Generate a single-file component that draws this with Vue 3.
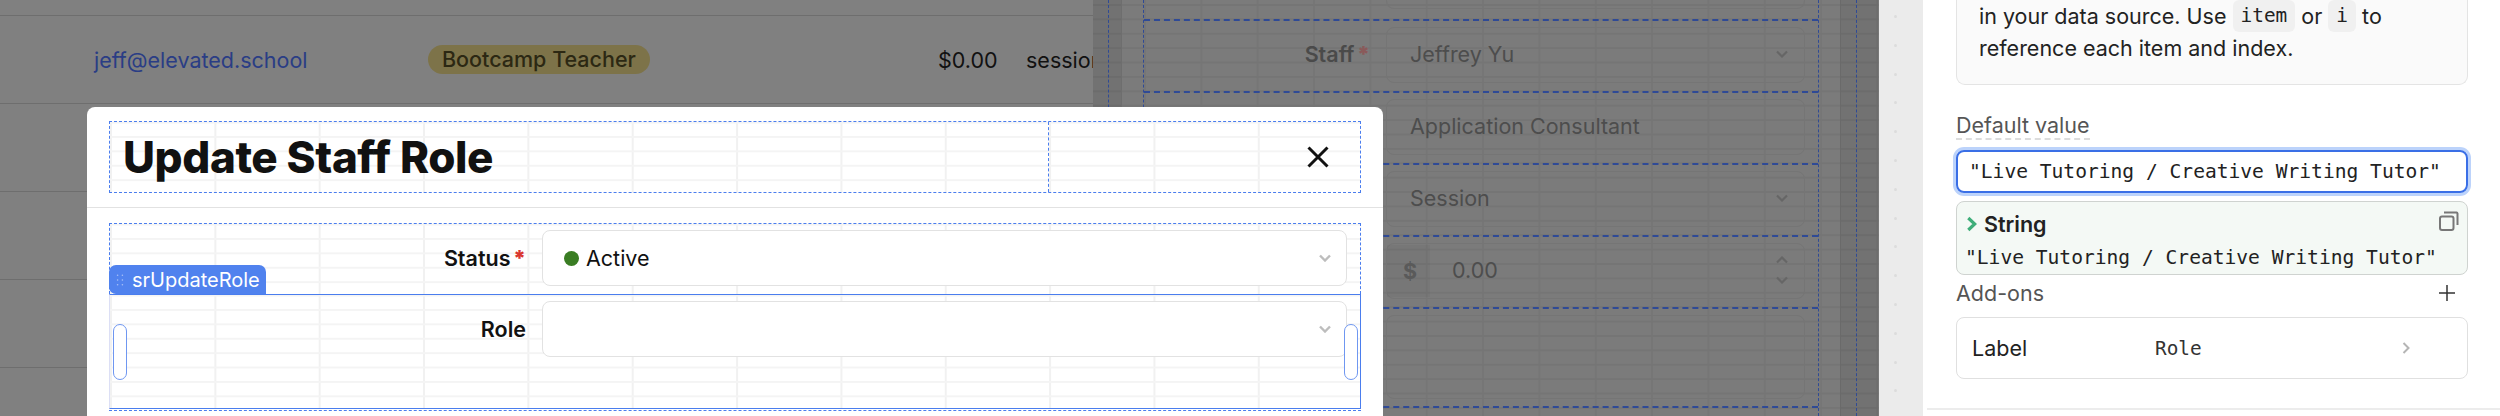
<template>
  <div class="page">
    <!-- table behind the overlay -->
    <section class="table">
      <div class="row first"></div>
      <div class="row">
        <span class="email">jeff@elevated.school</span>
        <span class="badge-cell"><span class="badge">Bootcamp Teacher</span></span>
        <span class="rate">$0.00</span>
        <span class="unit">session</span>
      </div>
      <div class="row"></div>
      <div class="row"></div>
      <div class="row"></div>
    </section>

    <!-- editor canvas, also dimmed -->
    <section class="canvas">
      <div class="gutter left"><i></i></div>
      <div class="form">
        <div class="form-row stub"><div class="box"></div></div>
        <div class="form-row" v-for="f in fields" :key="f.value">
          <label class="dim-label">
            <template v-if="f.label">{{ f.label }} <b>*</b></template>
          </label>
          <div class="box">
            <span v-if="f.prefix" class="prefix">$</span>
            <span class="dim-value" :class="{ num: f.prefix }">{{ f.value }}</span>
            <svg v-if="f.chevron" class="dim-chev" viewBox="0 0 12 8"><path d="M1 1.5l5 5 5-5" /></svg>
            <span v-if="f.prefix" class="spin">
              <svg class="dim-chev" viewBox="0 0 12 8"><path d="M1 6.5l5-5 5 5" /></svg>
              <svg class="dim-chev" viewBox="0 0 12 8"><path d="M1 1.5l5 5 5-5" /></svg>
            </span>
          </div>
        </div>
        <div class="form-row tall"><label class="dim-label"></label><div class="box"></div></div>
      </div>
      <div class="gutter right"><i></i></div>
    </section>

    <div class="rail">
      <span v-for="n in 14" :key="n" class="rail-dot"></span>
    </div>

    <!-- inspector -->
    <aside class="panel">
      <div class="info">
        <p>in your data source. Use <code>item</code> or <code>i</code> to</p>
        <p>reference each item and index.</p>
      </div>
      <div class="field-label"><span>Default value</span></div>
      <div class="code-input">"Live Tutoring / Creative Writing Tutor"</div>
      <div class="result">
        <div class="result-head">
          <svg class="green-chev" viewBox="0 0 12 16"><path d="M2.5 1.5L9.5 8l-7 6.5" /></svg>
          <strong>String</strong>
          <svg class="copy" viewBox="0 0 20 20"><rect x="1" y="5.5" width="13.5" height="13.5" rx="2" /><path d="M5 1.5h12.5a1.500 1.500 0 0 1 1 1V14" /></svg>
        </div>
        <div class="result-value">"Live Tutoring / Creative Writing Tutor"</div>
      </div>
      <div class="addons">
        <span>Add-ons</span>
        <svg viewBox="0 0 16 16"><path d="M8 0v16M0 8h16" /></svg>
      </div>
      <div class="addon-item">
        <span class="addon-name">Label</span>
        <code class="addon-value">Role</code>
        <svg viewBox="0 0 8 12"><path d="M1.500 1l5 5-5 5" /></svg>
      </div>
      <div class="panel-rule"></div>
    </aside>

    <!-- modal -->
    <div class="modal">
      <header class="modal-head">
        <div class="head-box">
          <div class="title-cell"><h1>Update Staff Role</h1></div>
          <div class="close-cell">
            <svg viewBox="0 0 22 22"><path d="M1.500 1.500l19 19M20.500 1.500l-19 19" /></svg>
          </div>
        </div>
      </header>
      <div class="modal-body">
        <div class="slot dashed">
          <label class="m-label">Status <b>*</b></label>
          <div class="m-select">
            <span class="dot"></span>
            <span>Active</span>
            <svg viewBox="0 0 12 8"><path d="M1 1.500l5 5 5-5" /></svg>
          </div>
          <div class="tag">
            <svg viewBox="0 0 10 16"><g><circle cx="2" cy="2" r="1" /><circle cx="8" cy="2" r="1" /><circle cx="2" cy="8" r="1" /><circle cx="8" cy="8" r="1" /><circle cx="2" cy="14" r="1" /><circle cx="8" cy="14" r="1" /></g></svg>
            srUpdateRole
          </div>
        </div>
        <div class="slot selected">
          <label class="m-label">Role</label>
          <div class="m-select">
            <svg viewBox="0 0 12 8"><path d="M1 1.500l5 5 5-5" /></svg>
          </div>
          <span class="handle h-left"></span>
          <span class="handle h-right"></span>
        </div>
        <div class="slot-next"></div>
      </div>
    </div>
  </div>
</template>

<script setup>
const fields = [
  { label: 'Staff', value: 'Jeffrey Yu', chevron: true },
  { label: '', value: 'Application Consultant' },
  { label: '', value: 'Session', chevron: true },
  { label: '', value: '0.00', prefix: true }
];
</script>

<style>
html,
body {
  margin: 0;
  overflow: hidden;
}
</style>

<style scoped>
.page {
  position: relative;
  display: flex;
  width: 2500px;
  height: 416px;
  overflow: hidden;
  font-family: Inter, "Liberation Sans", sans-serif;
}

/* table */
.table {
  width: 1093px;
  height: 416px;
  flex: none;
  background: #808080;
  overflow: hidden;
}
.row {
  display: flex;
  align-items: center;
  height: 87px;
  padding-left: 94px;
  border-bottom: 1px solid #6e6e6e;
  font-size: 21.5px;
  white-space: nowrap;
}
.row.first {
  height: 15px;
}
.row > span {
  flex: none;
}
.email {
  width: 334px;
  color: #2a3d85;
}
.badge-cell {
  width: 510px;
}
.badge {
  display: inline-block;
  height: 29px;
  line-height: 29px;
  padding: 0 14px;
  border-radius: 15px;
  background: #7d7349;
  color: #2c2813;
  font-weight: 500;
}
.rate {
  width: 88px;
  color: #111;
}
.unit {
  color: #111;
}

/* canvas */
.canvas {
  display: flex;
  width: 786px;
  height: 416px;
  flex: none;
  background-color: #7b7b7b;
  background-image:
    linear-gradient(to bottom, #757575 0 1.5px, transparent 1.5px),
    linear-gradient(to right, #767676 0 1.5px, transparent 1.5px);
  background-size: 100% 14.4px, 56.35px 100%;
  background-position: 0 4px, 51px 0;
}
.gutter {
  flex: none;
  height: 100%;
  padding-left: 15px;
  box-sizing: border-box;
  background: rgba(0, 0, 0, 0.07);
}
.gutter i {
  display: block;
  height: 100%;
  border-left: 1px dashed #2f4a96;
}
.gutter.left {
  width: 29px;
  border-right: 1px solid #6e6e6e;
  margin-right: 21px;
}
.gutter.right {
  width: 38px;
  border-left: 1px solid #6a6a6a;
  margin-left: 21px;
}
.form {
  flex: none;
  width: 676px;
  box-sizing: border-box;
  border-left: 1px dashed #2f4a96;
  border-right: 1px dashed #2f4a96;
}
.form-row {
  display: flex;
  box-sizing: border-box;
  height: 72px;
  padding: 6px 13px 0 0;
  border-top: 2px dashed #2f4a96;
}
.form-row.stub {
  height: 19px;
  padding-top: 0;
  border-top: 0;
  justify-content: flex-end;
}
.form-row.stub .box {
  flex: none;
  width: 419px;
  height: 9px;
  border-top: 0;
  border-radius: 0 0 8px 8px;
}
.form-row.tall {
  height: 101px;
  border-bottom: 2px dashed #2f4a96;
  padding-bottom: 9px;
}
.form-row.tall .box {
  height: 84px;
}
.dim-label {
  flex: none;
  width: 226px;
  padding-top: 14px;
  text-align: right;
  font-size: 21.5px;
  font-weight: 600;
  color: #4a4a4a;
  box-sizing: border-box;
  padding-right: 0;
}
.dim-label b {
  margin-left: -3px;
  color: #8a5a5a;
}
.box {
  flex: 1;
  display: flex;
  align-items: center;
  box-sizing: border-box;
  height: 56px;
  margin-left: 16px;
  padding: 0 16px 2px 23px;
  border: 1px solid #757575;
  border-radius: 8px;
}
.dim-value {
  flex: 1;
  font-size: 21.5px;
  color: #4d4d4d;
}
.dim-value.num {
  margin-left: 22px;
}
.prefix {
  width: 43px;
  margin-left: -23px;
  margin-bottom: -2px;
  height: 100%;
  line-height: 52px;
  box-sizing: border-box;
  padding-left: 16px;
  font-size: 21.5px;
  font-weight: 700;
  color: #5a5a5a;
  background: rgba(0, 0, 0, 0.03);
}
.dim-chev {
  width: 12px;
  height: 8px;
  fill: none;
  stroke: #666;
  stroke-width: 2.2;
}
.spin {
  display: flex;
  flex-direction: column;
  gap: 12px;
}

/* rail */
.rail {
  display: flex;
  flex-direction: column;
  align-items: center;
  gap: 25.8px;
  width: 44px;
  height: 416px;
  flex: none;
  box-sizing: border-box;
  padding: 15px 12px 0 0;
  background: #ebebeb;
}
.rail-dot {
  flex: none;
  width: 3px;
  height: 3px;
  border-radius: 50%;
  background: #dcdcdc;
}

/* inspector */
.panel {
  flex: 1;
  box-sizing: border-box;
  height: 416px;
  padding: 0 32px 0 33px;
  background: #fff;
  color: #222;
  font-size: 21.5px;
}
.info {
  box-sizing: border-box;
  height: 85px;
  padding-left: 22px;
  border: 1px solid #e4e4e4;
  border-top: 0;
  border-radius: 0 0 9px 9px;
  background: #fafafa;
}
.info p {
  margin: 0;
  height: 32px;
  line-height: 32px;
  white-space: nowrap;
}
.info code {
  display: inline-block;
  vertical-align: top;
  height: 32px;
  line-height: 32px;
  padding: 0 8px;
  border-radius: 6px;
  background: #f0f0f0;
  font-family: "DejaVu Sans Mono", monospace;
  font-size: 19.4px;
}
.field-label {
  margin-top: 27px;
  height: 30px;
  color: #555;
}
.field-label span {
  display: inline-block;
  box-sizing: border-box;
  height: 28px;
  line-height: 26px;
  border-bottom: 2px dashed #dcdcdc;
}
.code-input {
  box-sizing: border-box;
  height: 43px;
  margin-top: 8px;
  padding-left: 11px;
  border: 2px solid #3a6fe6;
  border-radius: 8px;
  box-shadow: 0 0 0 3px #bcd3fb;
  line-height: 39px;
  font-family: "DejaVu Sans Mono", monospace;
  font-size: 19.6px;
  white-space: nowrap;
}
.result {
  box-sizing: border-box;
  height: 74px;
  margin-top: 8px;
  padding: 0 8px;
  border: 1px solid #cfd3d0;
  border-radius: 8px;
  background: #f4f9f5;
}
.result-head {
  display: flex;
  align-items: center;
  height: 42px;
  padding-top: 1px;
  box-sizing: border-box;
  color: #222;
}
.result-head strong {
  flex: 1;
  margin-left: 7px;
  font-weight: 600;
}
.green-chev {
  width: 11px;
  height: 16px;
  margin-left: 1px;
  fill: none;
  stroke: #3fae7a;
  stroke-width: 3.5;
}
.copy {
  width: 20px;
  height: 20px;
  margin: -6px 0 0;
  fill: none;
  stroke: #777;
  stroke-width: 2;
}
.result-value {
  line-height: 28px;
  font-family: "DejaVu Sans Mono", monospace;
  font-size: 19.6px;
  white-space: nowrap;
}
.addons {
  display: flex;
  align-items: center;
  justify-content: space-between;
  height: 36px;
  color: #555;
}
.addons svg {
  width: 16px;
  height: 16px;
  margin-right: 13px;
  fill: none;
  stroke: #333;
  stroke-width: 1.5;
}
.addon-item {
  display: flex;
  align-items: center;
  box-sizing: border-box;
  height: 62px;
  margin-top: 6px;
  padding-left: 15px;
  border: 1px solid #e0e0e0;
  border-radius: 8px;
}
.addon-name {
  width: 183px;
  color: #222;
}
.addon-value {
  width: 247px;
  font-family: "DejaVu Sans Mono", monospace;
  font-size: 19.4px;
  color: #333;
}
.addon-item svg {
  width: 8px;
  height: 12px;
  fill: none;
  stroke: #b5b5b5;
  stroke-width: 2;
}
.panel-rule {
  height: 2px;
  margin: 29px -32px 0 -29px;
  background: #ececec;
}

/* modal, over the dimmed page */
.modal {
  position: absolute;
  left: 87px;
  top: 107px;
  width: 1296px;
  height: 320px;
  border-radius: 8px 8px 0 0;
  background: #fff;
  color: #111;
}
.modal-head {
  box-sizing: border-box;
  height: 101px;
  padding: 14px 22px 0;
  border-bottom: 1px solid #e2e2e2;
}
.head-box,
.slot {
  background-image:
    linear-gradient(to bottom, #f4f4f4 0 2px, transparent 2px),
    linear-gradient(to right, #f1f1f1 0 1.5px, transparent 1.5px);
  background-size: 100% 14.4px, 104.35px 100%;
  background-position: 0 14px, 0 0;
}
.head-box {
  display: flex;
  box-sizing: border-box;
  height: 72px;
  border: 1px dashed #4a7dee;
  border-width: 1.5px 1px;
}
.title-cell {
  display: flex;
  align-items: center;
  width: 939px;
  flex: none;
  box-sizing: border-box;
  padding-left: 13px;
  border-right: 1px dashed #4a7dee;
}
h1 {
  margin: 0;
  font-size: 44px;
  font-weight: 800;
  letter-spacing: -0.4px;
  white-space: nowrap;
}
.close-cell {
  flex: 1;
  display: flex;
  align-items: center;
  justify-content: flex-end;
  padding-right: 31px;
}
.close-cell svg {
  width: 22px;
  height: 22px;
  fill: none;
  stroke: #111;
  stroke-width: 3;
}
.modal-body {
  padding: 15px 22px 0;
}
.slot {
  position: relative;
  display: flex;
  box-sizing: border-box;
  padding-right: 15px;
}
.slot.dashed {
  height: 71px;
  padding-top: 6px;
  border: 1px dashed #4a7dee;
  border-bottom: 0;
  border-width: 1.5px 1px 0;
}
.slot.selected {
  height: 115px;
  padding-top: 6px;
  border: 1.5px solid #4a7dee;
  border-left-color: #dcdff5;
}
.slot-next {
  height: 4px;
  margin-top: 1px;
  border-top: 1.5px dashed #4a7dee;
}
.m-label {
  flex: none;
  width: 416px;
  padding-top: 15px;
  text-align: right;
  font-size: 21.5px;
  font-weight: 600;
}
.m-label b {
  margin-left: -3px;
  color: #d9362f;
}
.m-select {
  flex: none;
  display: flex;
  align-items: center;
  gap: 7px;
  box-sizing: border-box;
  width: 805px;
  height: 56px;
  margin-left: 16px;
  padding: 0 15px 0 21px;
  border: 1px solid #e2e2e2;
  border-radius: 8px;
  background: #fff;
  font-size: 21.5px;
}
.m-select svg {
  width: 12px;
  height: 8px;
  margin-left: auto;
  fill: none;
  stroke: #bdbdbd;
  stroke-width: 2.4;
}
.dot {
  width: 15px;
  height: 15px;
  border-radius: 50%;
  background: #3a7d23;
}
.tag {
  position: absolute;
  left: -1px;
  bottom: 0;
  display: flex;
  align-items: center;
  gap: 8px;
  box-sizing: border-box;
  width: 157px;
  height: 29px;
  padding-left: 7px;
  border-radius: 7px 7px 0 7px;
  background: #5082ee;
  color: #fff;
  font-size: 20px;
  white-space: nowrap;
}
.tag svg {
  width: 8px;
  height: 14px;
  fill: #a9c1f6;
}
.handle {
  position: absolute;
  top: 29px;
  box-sizing: border-box;
  width: 14px;
  height: 56px;
  border: 1.5px solid #6f97f1;
  border-radius: 7px;
  background: #fff;
}
.h-left {
  left: 3px;
}
.h-right {
  right: 2px;
}
</style>
